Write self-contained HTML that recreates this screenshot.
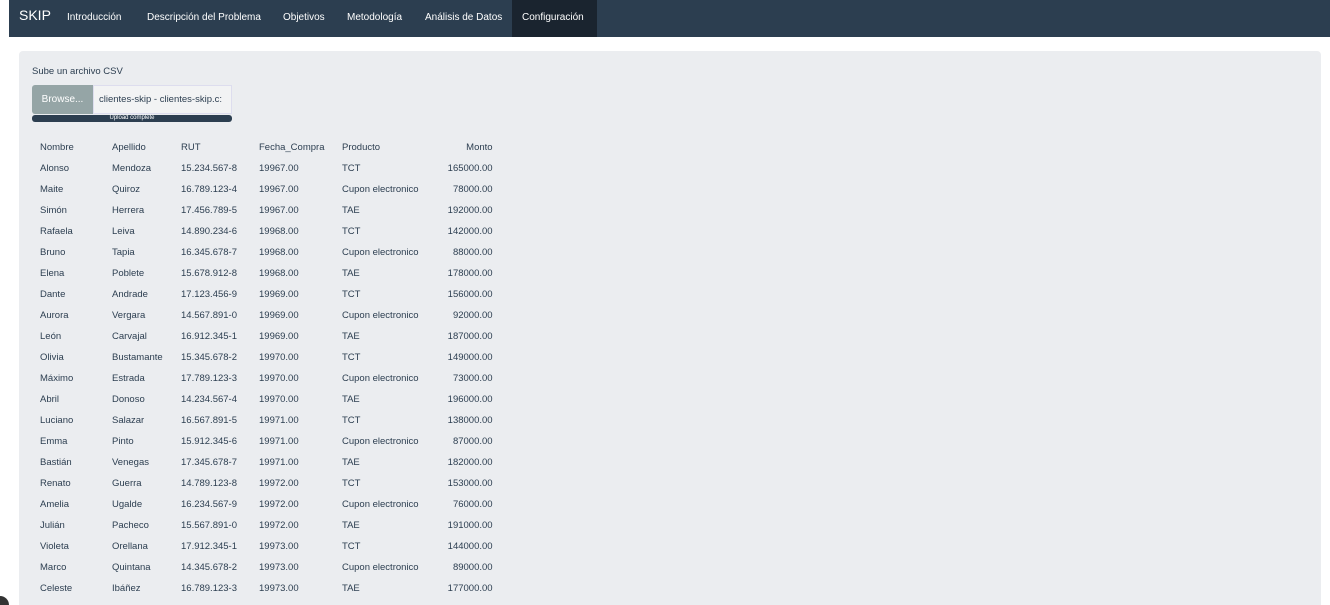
<!DOCTYPE html>
<html><head><meta charset="utf-8"><style>
*{box-sizing:border-box;margin:0;padding:0}
html,body{width:1330px;height:605px;overflow:hidden}
body{background:#fff;font-family:"Liberation Sans",sans-serif;font-size:10px;color:#2c3e50;position:relative}
.nav{position:absolute;left:9px;top:0;width:1321px;height:37px;background:#2c3e50;color:#fff}
.brand{position:absolute;left:10px;top:7px;font-size:14px}
.nav a{position:absolute;top:12px;font-size:10px;color:#fff}
.act{position:absolute;left:503px;top:0;width:85px;height:37px;background:#1a242f}
.panel{position:absolute;left:19px;top:51px;width:1302px;height:570px;background:#ebedf0;border-radius:4px}
.lbl{position:absolute;left:13px;top:15px;font-size:9.5px}
.btn{position:absolute;left:13px;top:34px;width:61px;height:29px;background:#95a5a6;color:#fff;border-radius:3px 0 0 3px;text-align:center;line-height:29px}
.file{position:absolute;left:74px;top:34px;width:139px;height:29px;background:#f2f3f4;border:1px solid #dde;line-height:27px;padding-left:5px;font-size:9.5px}
.bar{position:absolute;left:13px;top:64px;width:200px;height:7px;background:#2c3e50;border-radius:3px;color:#fff;font-size:6px;text-align:center;line-height:7px}
table{position:absolute;left:14px;top:86px;border-collapse:collapse}
td{height:21px;padding:0 7px;white-space:nowrap;font-size:9.5px}
td:nth-child(1){width:72px}td:nth-child(2){width:69px}td:nth-child(3){width:78px}td:nth-child(4){width:83px}td:nth-child(5){width:86px}td:nth-child(6){text-align:right;width:74px}
.corner{position:absolute;left:0;top:596px;width:9px;height:9px;background:#333;border-radius:0 9px 0 0}
</style></head><body>
<div class="nav"><div class="act"></div><span class="brand">SKIP</span>
<a style="left:58px">Introducción</a><a style="left:138px">Descripción del Problema</a><a style="left:274px">Objetivos</a><a style="left:338px">Metodología</a><a style="left:416px">Análisis de Datos</a><a style="left:513px">Configuración</a></div>
<div class="corner"></div>
<div class="panel">
<div class="lbl">Sube un archivo CSV</div>
<div class="btn">Browse...</div><div class="file">clientes-skip - clientes-skip.c:</div>
<div class="bar">Upload complete</div>
<table>
<tr><td>Nombre</td><td>Apellido</td><td>RUT</td><td>Fecha_Compra</td><td>Producto</td><td>Monto</td></tr>
<tr><td>Alonso</td><td>Mendoza</td><td>15.234.567-8</td><td>19967.00</td><td>TCT</td><td>165000.00</td></tr>
<tr><td>Maite</td><td>Quiroz</td><td>16.789.123-4</td><td>19967.00</td><td>Cupon electronico</td><td>78000.00</td></tr>
<tr><td>Simón</td><td>Herrera</td><td>17.456.789-5</td><td>19967.00</td><td>TAE</td><td>192000.00</td></tr>
<tr><td>Rafaela</td><td>Leiva</td><td>14.890.234-6</td><td>19968.00</td><td>TCT</td><td>142000.00</td></tr>
<tr><td>Bruno</td><td>Tapia</td><td>16.345.678-7</td><td>19968.00</td><td>Cupon electronico</td><td>88000.00</td></tr>
<tr><td>Elena</td><td>Poblete</td><td>15.678.912-8</td><td>19968.00</td><td>TAE</td><td>178000.00</td></tr>
<tr><td>Dante</td><td>Andrade</td><td>17.123.456-9</td><td>19969.00</td><td>TCT</td><td>156000.00</td></tr>
<tr><td>Aurora</td><td>Vergara</td><td>14.567.891-0</td><td>19969.00</td><td>Cupon electronico</td><td>92000.00</td></tr>
<tr><td>León</td><td>Carvajal</td><td>16.912.345-1</td><td>19969.00</td><td>TAE</td><td>187000.00</td></tr>
<tr><td>Olivia</td><td>Bustamante</td><td>15.345.678-2</td><td>19970.00</td><td>TCT</td><td>149000.00</td></tr>
<tr><td>Máximo</td><td>Estrada</td><td>17.789.123-3</td><td>19970.00</td><td>Cupon electronico</td><td>73000.00</td></tr>
<tr><td>Abril</td><td>Donoso</td><td>14.234.567-4</td><td>19970.00</td><td>TAE</td><td>196000.00</td></tr>
<tr><td>Luciano</td><td>Salazar</td><td>16.567.891-5</td><td>19971.00</td><td>TCT</td><td>138000.00</td></tr>
<tr><td>Emma</td><td>Pinto</td><td>15.912.345-6</td><td>19971.00</td><td>Cupon electronico</td><td>87000.00</td></tr>
<tr><td>Bastián</td><td>Venegas</td><td>17.345.678-7</td><td>19971.00</td><td>TAE</td><td>182000.00</td></tr>
<tr><td>Renato</td><td>Guerra</td><td>14.789.123-8</td><td>19972.00</td><td>TCT</td><td>153000.00</td></tr>
<tr><td>Amelia</td><td>Ugalde</td><td>16.234.567-9</td><td>19972.00</td><td>Cupon electronico</td><td>76000.00</td></tr>
<tr><td>Julián</td><td>Pacheco</td><td>15.567.891-0</td><td>19972.00</td><td>TAE</td><td>191000.00</td></tr>
<tr><td>Violeta</td><td>Orellana</td><td>17.912.345-1</td><td>19973.00</td><td>TCT</td><td>144000.00</td></tr>
<tr><td>Marco</td><td>Quintana</td><td>14.345.678-2</td><td>19973.00</td><td>Cupon electronico</td><td>89000.00</td></tr>
<tr><td>Celeste</td><td>Ibáñez</td><td>16.789.123-3</td><td>19973.00</td><td>TAE</td><td>177000.00</td></tr>
<tr><td>Lucas</td><td>Avila</td><td>15.234.567-4</td><td>19974.00</td><td>TCT</td><td>158000.00</td></tr>
</table>
</div>
</body></html>
